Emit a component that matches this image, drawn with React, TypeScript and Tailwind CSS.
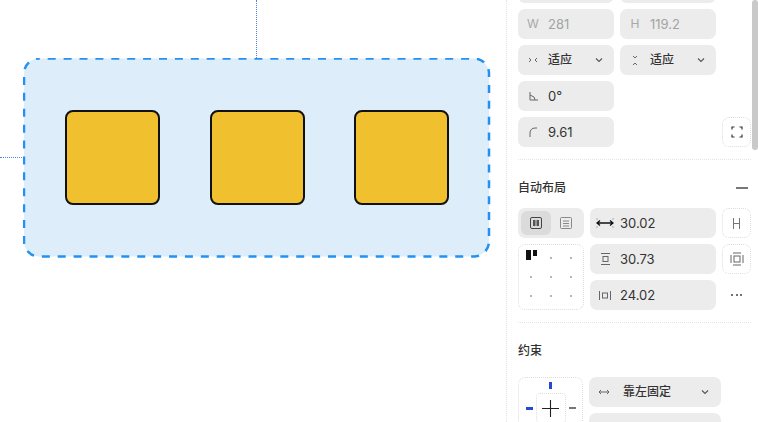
import React from "react";

const font = { fontFamily: '"Inter", "Liberation Sans", "Noto Sans CJK SC", sans-serif' };

function Field({ icon, label, muted, chevron, cjk, className = "" }: { icon: React.ReactNode; label: string; muted?: boolean; chevron?: boolean; cjk?: boolean; className?: string }) {
  return (
    <div className={`flex h-[30px] items-center rounded-[7px] bg-[#ececec] ${className}`}>
      <span className="flex w-[30px] shrink-0 items-center justify-center">{icon}</span>
      <span className={`leading-none ${cjk ? "text-[12px] font-medium" : "text-[13px]"} ${muted ? "text-[#a3a3a3]" : "text-[#333333]"}`}>{label}</span>
      {chevron && (
        <svg className="ml-auto mr-[11px]" width="8" height="6" viewBox="0 0 8 6" fill="none" stroke="#555" strokeWidth="1.1"><path d="M1 1.5 4 4.5 7 1.5" /></svg>
      )}
    </div>
  );
}

function Box({ children, className = "" }: { children?: React.ReactNode; className?: string }) {
  return <div className={`flex h-[30px] w-[29px] shrink-0 items-center justify-center rounded-[7px] border border-dotted border-[#dcdcdc] ${className}`}>{children}</div>;
}

const stroke = { fill: "none", stroke: "#666", strokeWidth: 1 };

function Square() {
  return <div className="h-[95px] w-[95px] rounded-[8px] border-[2.5px] border-[#111111] bg-[#f0c02f]" />;
}

function Dot() {
  return <span className="h-[2px] w-[2px] justify-self-center self-center bg-[#b5b5b5]" />;
}

export default function App() {
  return (
    <div className="flex h-[422px] w-[758px] overflow-hidden bg-white" style={font}>
      <div className="relative w-[506px] shrink-0 pl-[23px] pt-[58px]">
        <div className="absolute left-[256px] top-0 h-[58px] border-l border-dotted border-[#5b7fe8]" />
        <div className="absolute left-0 top-[157px] w-[24px] border-t border-dotted border-[#5b7fe8]" />
        <div className="relative h-[200px] w-[468px]">
          <svg className="absolute inset-0" width="468" height="200" viewBox="0 0 468 200">
            <rect x="1" y=".5" width="465" height="198" rx="15" fill="#ddeefa" stroke="#2391f4" strokeWidth="2.5" strokeDasharray="8 7.9" strokeDashoffset="-8.7" />
          </svg>
          <div className="relative flex gap-[49.6px] pl-[42px] pt-[52px]">
            <Square />
            <Square />
            <Square />
          </div>
        </div>
      </div>

      <div className="relative flex-1 border-l border-dotted border-[#e4e4e4] pl-[11px]">
        <div className="absolute right-0 top-0 h-[150px] w-[6px] rounded-[3px] bg-[#c9c9c9]" />
        <div className="mt-[-21px] flex w-[198px] flex-wrap gap-x-[6px] gap-y-[6px]">
          <div className="h-[24px] w-[96px] rounded-[7px] bg-[#ececec]" />
          <div className="h-[24px] w-[96px] rounded-[7px] bg-[#ececec]" />
          <Field className="w-[96px]" muted label="281" icon={<span className="text-[12px] text-[#a8a8a8]">W</span>} />
          <Field className="w-[96px]" muted label="119.2" icon={<span className="text-[12px] text-[#a8a8a8]">H</span>} />
          <Field className="w-[96px]" chevron cjk label="适应" icon={
            <svg width="10" height="6" viewBox="0 0 10 6" {...stroke}><path d="M1 1 3 3 1 5M9 1 7 3 9 5" /></svg>
          } />
          <Field className="w-[96px]" chevron cjk label="适应" icon={
            <svg width="6" height="11" viewBox="0 0 6 11" {...stroke}><path d="M1 1 3 3 5 1M1 10 3 8 5 10" /></svg>
          } />
          <Field className="w-[96px]" label="0°" icon={
            <svg width="9" height="9" viewBox="0 0 9 9" {...stroke}><path d="M1 0v8h8M1 3 5 5 6 8" /></svg>
          } />
          <div className="w-[96px]" />
        </div>
        <div className="mt-[6px] flex w-[233px] items-center justify-between">
          <Field className="w-[96px]" label="9.61" icon={
            <svg width="8" height="10" viewBox="0 0 8 10" {...stroke}><path d="M1 10V6C1 3 3 1 6 1h2" /></svg>
          } />
          <Box>
            <svg width="12" height="12" viewBox="0 0 12 12" fill="none" stroke="#333" strokeWidth="1.2"><path d="M1 3.5V1h2.5M8.5 1H11v2.5M1 8.5V11h2.5M8.5 11H11V8.5" /></svg>
          </Box>
        </div>

        <div className="mt-[12px] w-[233px] border-t border-dotted border-[#e4e4e4]" />

        <div className="mt-[21px] flex w-[233px] items-center justify-between">
          <span className="text-[12px] font-medium leading-[14px] text-[#333]">自动布局</span>
          <span className="mr-[3px] h-[1.5px] w-[12px] bg-[#777]" />
        </div>

        <div className="mt-[13px] flex w-[233px] gap-[6px]">
          <div className="flex w-[66px] shrink-0 flex-col gap-[6px]">
            <div className="flex h-[30px] items-center rounded-[7px] bg-[#ececec] p-[3px]">
              <span className="flex h-[24px] w-[30px] items-center justify-center rounded-[6px] bg-[#dbdbdb]">
                <svg width="12" height="12" viewBox="0 0 12 12" fill="none"><rect x=".5" y=".5" width="11" height="11" rx="1.5" stroke="#444" /><rect x="3" y="3" width="2.5" height="6" fill="#555" /><rect x="6.5" y="3" width="2.5" height="6" fill="#555" /></svg>
              </span>
              <span className="flex h-[24px] flex-1 items-center justify-center">
                <svg width="12" height="12" viewBox="0 0 12 12" fill="none"><rect x=".5" y=".5" width="11" height="11" rx="1" stroke="#888" /><path d="M3 4h6M3 6.5h6M3 9h6" stroke="#888" /></svg>
              </span>
            </div>
            <div className="grid h-[66px] grid-cols-3 grid-rows-3 rounded-[7px] border border-dotted border-[#dcdcdc] px-[2px] py-[3px]">
              <span className="flex items-start justify-center gap-[2px] pt-[2px]">
                <span className="h-[10px] w-[5px] bg-[#111]" />
                <span className="h-[6px] w-[4px] bg-[#111]" />
              </span>
              <Dot /><Dot /><Dot /><Dot /><Dot /><Dot /><Dot /><Dot />
            </div>
          </div>

          <div className="flex w-[126px] shrink-0 flex-col gap-[6px]">
            <Field label="30.02" icon={
              <svg width="18" height="12" viewBox="0 0 18 12" fill="none" stroke="#111" strokeWidth="1.3"><path d="M1 6h16M4 3.5 1 6l3 2.5M14 3.5 17 6l-3 2.5" /><path d="M1 1v2M17 1v2M1 9v2M17 9v2" stroke="#999" strokeWidth=".8" /></svg>
            } />
            <Field label="30.73" icon={
              <svg width="11" height="12" viewBox="0 0 11 12" {...stroke}><path d="M1 .5h9M1 11.5h9" /><rect x="3" y="3.5" width="5" height="5" /></svg>
            } />
            <Field label="24.02" icon={
              <svg width="12" height="11" viewBox="0 0 12 11" {...stroke}><path d="M.5 1v9M11.5 1v9" /><rect x="3.5" y="3" width="5" height="5" /></svg>
            } />
          </div>

          <div className="flex flex-col gap-[6px]">
            <Box>
              <svg width="7" height="11" viewBox="0 0 7 11" fill="none" stroke="#777"><path d="M.5 0v11M6.5 0v11M1 5.5h5" /></svg>
            </Box>
            <Box>
              <svg width="14" height="14" viewBox="0 0 14 14" {...stroke}><path d="M3 1h8M3 13h8M1 3v8M13 3v8" /><rect x="4" y="4" width="6" height="6" /></svg>
            </Box>
            <div className="flex h-[30px] w-[29px] items-center justify-center gap-[2.5px]">
              <span className="h-[2px] w-[2px] rounded-full bg-[#444]" />
              <span className="h-[2px] w-[2px] rounded-full bg-[#444]" />
              <span className="h-[2px] w-[2px] rounded-full bg-[#444]" />
            </div>
          </div>
        </div>

        <div className="mt-[12px] w-[233px] border-t border-dotted border-[#e4e4e4]" />

        <div className="mt-[21px] text-[12px] font-medium leading-[14px] text-[#333]">约束</div>

        <div className="mt-[19px] flex gap-[6px]">
          <div className="flex h-[66px] w-[65px] shrink-0 flex-col items-center rounded-[7px] border border-dotted border-[#dcdcdc] pt-[4px]">
            <span className="h-[7px] w-[3px] bg-[#2548d8]" />
            <div className="mt-[4px] flex items-center gap-[3px]">
              <span className="h-[3px] w-[7px] bg-[#2548d8]" />
              <span className="flex h-[30px] w-[30px] items-center justify-center rounded-[4px] border border-dotted border-[#dcdcdc]">
                <svg width="17" height="17" viewBox="0 0 17 17" fill="none" stroke="#222" strokeWidth="1.1"><path d="M8.5 0v17M0 8.5h17" /></svg>
              </span>
              <span className="h-[1.5px] w-[7px] bg-[#777]" />
            </div>
          </div>
          <div className="flex flex-col gap-[6px]">
            <div className="flex h-[30px] w-[132px] items-center rounded-[7px] bg-[#ececec]">
              <svg className="ml-[9px]" width="12" height="6" viewBox="0 0 12 6" {...stroke}><path d="M1 3h10M3 1 1 3l2 2M9 1l2 2-2 2" /></svg>
              <span className="ml-[13px] text-[12px] font-medium leading-none text-[#333]">靠左固定</span>
              <svg className="ml-auto mr-[12px]" width="8" height="6" viewBox="0 0 8 6" fill="none" stroke="#555" strokeWidth="1.1"><path d="M1 1.5 4 4.5 7 1.5" /></svg>
            </div>
            <div className="h-[30px] w-[132px] rounded-[7px] bg-[#ececec]" />
          </div>
        </div>
      </div>
    </div>
  );
}
